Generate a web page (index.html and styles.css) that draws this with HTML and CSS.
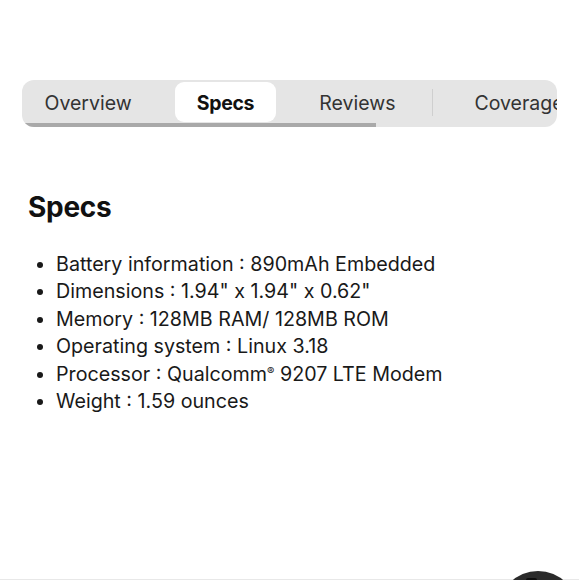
FILE: index.html
```html
<!DOCTYPE html>
<html lang="en">
<head>
<meta charset="utf-8">
<title>Specs</title>
<link rel="stylesheet" href="styles.css">
</head>
<body>
<div class="page">
  <nav class="tabbar">
    <div class="tabs">
      <a class="tab">Overview</a>
      <a class="tab active">Specs</a>
      <a class="tab">Reviews</a>
      <span class="sep"></span>
      <a class="tab">Coverage</a>
    </div>
    <div class="scroll-track"><div class="scroll-thumb"></div></div>
  </nav>

  <section class="specs">
    <h2 class="specs-title">Specs</h2>
    <ul class="spec-list">
      <li>Battery information : 890mAh Embedded</li>
      <li>Dimensions : 1.94" x 1.94" x 0.62"</li>
      <li>Memory : 128MB RAM/ 128MB ROM</li>
      <li>Operating system : Linux 3.18</li>
      <li>Processor : Qualcomm<sup class="reg">®</sup> 9207 LTE Modem</li>
      <li>Weight : 1.59 ounces</li>
    </ul>
  </section>
</div>
<div class="bottom-line"></div>
<button class="fab" aria-label="Chat"><span class="fab-icon"></span></button>
</body>
</html>
```

FILE: styles.css
```css
* { box-sizing: border-box; }
html, body { margin: 0; padding: 0; background: #fff; }
body {
  font-family: Inter, "Noto Sans", "Liberation Sans", sans-serif;
  color: #191919;
  height: 580px;
  overflow: hidden;
}
.page { padding: 80px 22px 0 22px; }

.tabbar {
  position: relative;
  width: 535px;
  height: 47px;
  background: #e5e5e5;
  border-radius: 12px;
  overflow: hidden;
}
.tabs {
  display: flex;
  align-items: center;
  height: 43px;
  padding: 2px 0 1px 1px;
  white-space: nowrap;
}
.tab {
  flex: none;
  display: flex;
  align-items: center;
  height: 40px;
  padding: 2px 21.5px 0;
  margin-right: 22px;
  border-radius: 9px;
  font-size: 19.5px;
  color: #333;
}
.tab.active {
  background: #fff;
  color: #111;
  font-weight: 700;
  letter-spacing: -0.3px;
}
.sep {
  flex: none;
  width: 1px;
  height: 27px;
  background: #cfcfcf;
  margin: 0 20px 0 -7px;
}
.scroll-track {
  height: 4px;
}
.scroll-thumb {
  width: 354px;
  height: 4px;
  background: #a9a9a9;
}

.specs { padding: 0 6px; }
.specs-title {
  margin: 60px 0 0;
  font-size: 28px;
  font-weight: 700;
  line-height: 40px;
  color: #111;
  letter-spacing: -0.3px;
}
.spec-list {
  margin: 24px 0 0;
  padding: 0 0 0 28px;
  font-size: 19.7px;
  line-height: 27.4px;
  color: #191919;
}
.reg { font-size: 11px; vertical-align: 6px; line-height: 0; }

.bottom-line {
  position: fixed;
  left: 0; right: 0; bottom: 0;
  height: 1px;
  background: #e8e8e8;
}
.fab {
  position: fixed;
  left: 498px;
  top: 571px;
  width: 80px;
  height: 80px;
  border: 0;
  padding: 0;
  border-radius: 50%;
  background: #2b2b2b;
}
.fab-icon {
  position: absolute;
  left: 28px;
  top: 7px;
  width: 11px;
  height: 6px;
  background: #0d0d0d;
  border-radius: 2px;
}
```
